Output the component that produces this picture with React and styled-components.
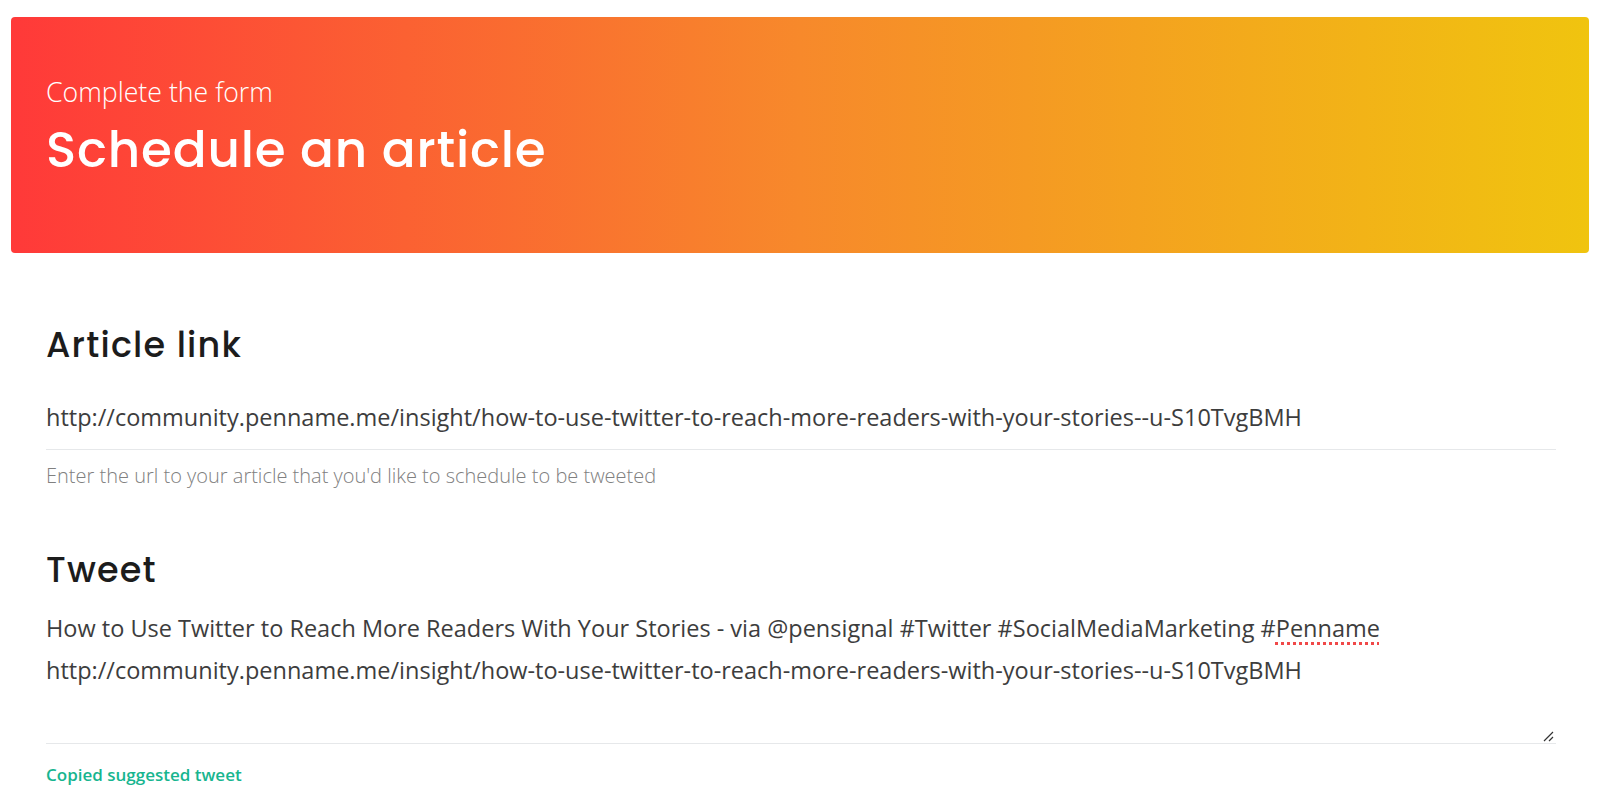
import styled, { createGlobalStyle } from 'styled-components';

const GlobalStyle = createGlobalStyle`
  * { box-sizing: border-box; }
  body {
    margin: 0;
    background: #fff;
    font-family: "Open Sans", "Liberation Sans", sans-serif;
  }
`;

const Page = styled.div`
  padding: 17px 11px 0;
`;

const Hero = styled.header`
  height: 236px;
  padding: 59px 35px 0;
  border-radius: 4px;
  background: linear-gradient(to right, #ff3939 0%, #f7892b 50%, #f0c40f 100%);
  color: #fff;
`;

const Kicker = styled.p`
  margin: 0;
  font-size: 26.7px;
  font-weight: 300;
  line-height: 32px;
`;

const Heading = styled.h1`
  margin: 14px 0 0;
  font-family: "Poppins", Inter, "Noto Sans", sans-serif;
  font-size: 50px;
  font-weight: 500;
  line-height: 56px;
  letter-spacing: 0.8px;
`;

const Form = styled.form`
  display: flex;
  flex-direction: column;
  padding: 0 33px 0 35px;
`;

const Field = styled.div`
  display: flex;
  flex-direction: column;
  margin-top: ${(p) => p.$gap}px;
`;

const Label = styled.label`
  font-family: "Poppins", Inter, "Noto Sans", sans-serif;
  font-size: 35px;
  font-weight: 500;
  line-height: 40px;
  letter-spacing: 1.2px;
  color: #1c1c1c;
`;

const Input = styled.input`
  margin-top: 20px;
  padding: 0;
  height: 65px;
  border: none;
  border-bottom: 1px solid #e6e8ea;
  outline: none;
  font-family: "Open Sans", sans-serif;
  font-size: 23.5px;
  color: #3d3d3d;
  background: transparent;
`;

const Help = styled.small`
  margin-top: 14px;
  font-size: 20px;
  font-weight: 300;
  line-height: 24px;
  color: #808080;
`;

const TweetBox = styled.div`
  position: relative;
  margin-top: 17px;
  height: 137px;
  border-bottom: 1px solid #e6e8ea;
  font-size: 23.5px;
  line-height: 42px;
  color: #3d3d3d;
`;

const Misspelled = styled.span`
  text-decoration: underline dotted #f04848;
  text-decoration-thickness: 3px;
  text-underline-offset: 5px;
`;

const Grip = styled.svg`
  position: absolute;
  right: 2px;
  bottom: 1px;
  width: 12px;
  height: 12px;
`;

const Status = styled.p`
  margin: 19px 0 0;
  font-size: 17px;
  font-weight: 600;
  line-height: 24px;
  color: #17b58f;
`;

const url =
  'http://community.penname.me/insight/how-to-use-twitter-to-reach-more-readers-with-your-stories--u-S10TvgBMH';

export default function App() {
  return (
    <Page>
      <GlobalStyle />
      <Hero>
        <Kicker>Complete the form</Kicker>
        <Heading>Schedule an article</Heading>
      </Hero>

      <Form onSubmit={(e) => e.preventDefault()}>
        <Field $gap={72}>
          <Label htmlFor="link">Article link</Label>
          <Input id="link" readOnly value={url} />
          <Help>Enter the url to your article that you'd like to schedule to be tweeted</Help>
        </Field>

        <Field $gap={62}>
          <Label>Tweet</Label>
          <TweetBox>
            How to Use Twitter to Reach More Readers With Your Stories - via @pensignal #Twitter
            #SocialMediaMarketing #<Misspelled>Penname</Misspelled>
            <br />
            {url}
            <Grip viewBox="0 0 12 12">
              <path d="M11 2 L2 11 M11 7 L7 11" stroke="#333" strokeWidth="1.2" fill="none" />
            </Grip>
          </TweetBox>
          <Status>Copied suggested tweet</Status>
        </Field>
      </Form>
    </Page>
  );
}
